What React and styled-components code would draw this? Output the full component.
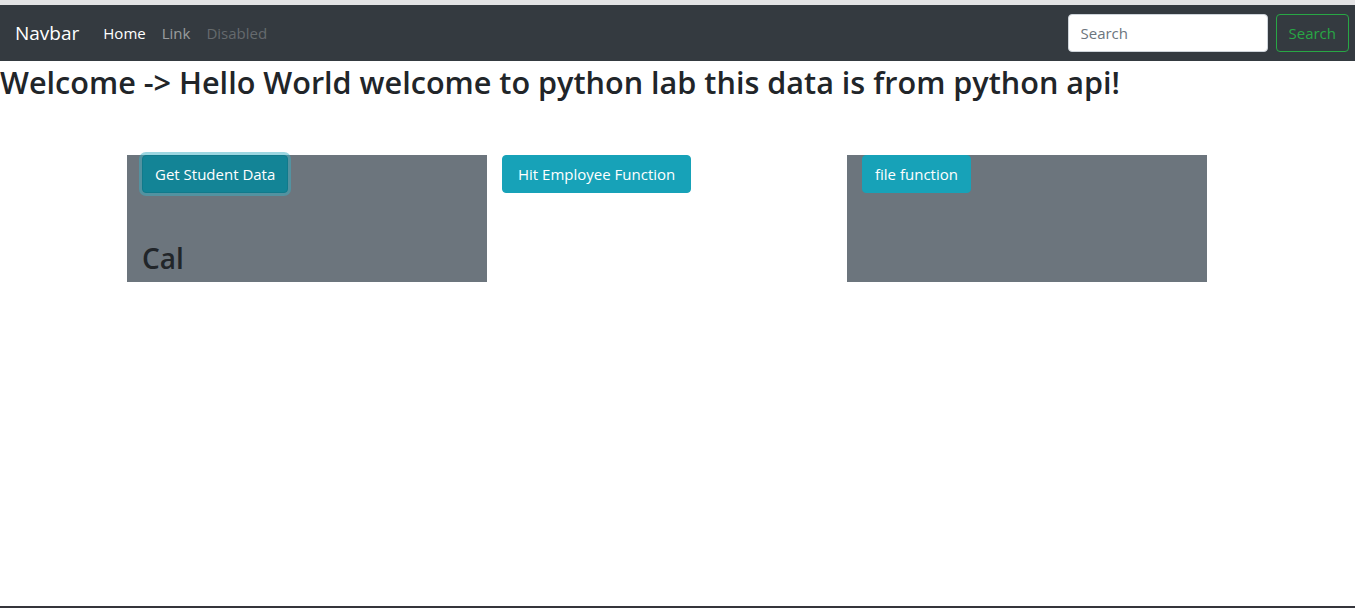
import React from 'react'
import styled, { createGlobalStyle } from 'styled-components'

const GlobalStyle = createGlobalStyle`
  html, body {
    margin: 0;
    padding: 0;
    background: #fff;
  }
  body {
    font-family: "Open Sans", "Noto Sans", Arial, sans-serif;
    color: #212529;
  }
  * { box-sizing: border-box; }
`

const Frame = styled.div`
  min-height: 100vh;
  display: flex;
  flex-direction: column;
  border-top: 5px solid #e3e3e5;
  border-bottom: 2px solid #35353b;
`

const Nav = styled.nav`
  height: 56px;
  background: #343a40;
  display: flex;
  align-items: center;
  padding: 0 6px 0 15px;
`

const Brand = styled.a`
  color: #fff;
  font-size: 19px;
  margin-right: 16px;
  text-decoration: none;
`

const NavLinks = styled.div`
  display: flex;
`

const NavLink = styled.a`
  padding: 0 8px;
  font-size: 15px;
  text-decoration: none;
  color: ${p => p.$state === 'active' ? '#fff' : p.$state === 'disabled' ? 'rgba(255,255,255,.25)' : 'rgba(255,255,255,.5)'};
`

const SearchForm = styled.form`
  margin-left: auto;
  display: flex;
  gap: 8px;
`

const SearchInput = styled.input`
  width: 200px;
  height: 38px;
  border: 1px solid #ced4da;
  border-radius: 4px;
  padding: 6px 12px;
  font-family: inherit;
  font-size: 15px;
  color: #495057;
  &::placeholder { color: #6c757d; }
`

const OutlineButton = styled.button`
  height: 38px;
  padding: 0 12px;
  background: transparent;
  border: 1px solid #28a745;
  border-radius: 4px;
  color: #28a745;
  font-family: inherit;
  font-size: 15px;
`

const Heading = styled.h2`
  margin: 0 0 8px;
  font-size: 30.6px;
  font-weight: 600;
  line-height: 42px;
  white-space: nowrap;
`

const Row = styled.div`
  display: grid;
  grid-template-columns: repeat(3, 360px);
  margin: 44px 0 0 127px;
`

const Col = styled.div`
  padding: 0 15px;
  background: ${p => p.$filled ? '#6c757d' : 'transparent'};
`

const Button = styled.button`
  height: 38px;
  padding: 0 ${p => p.$wide ? '15px' : '12px'};
  border-radius: 4px;
  font-family: inherit;
  font-size: 15px;
  color: #fff;
  background: ${p => p.$focused ? '#138496' : '#17a2b8'};
  border: 1px solid ${p => p.$focused ? '#117a8b' : '#17a2b8'};
  box-shadow: ${p => p.$focused ? '0 0 0 3px rgba(58,176,195,.5)' : 'none'};
`

const Result = styled.h3`
  margin: 49px 0 6px;
  font-size: 28px;
  font-weight: 600;
  line-height: 1.2;
`

export default function App() {
  return (
    <Frame>
      <GlobalStyle />
      <Nav>
        <Brand href="#">Navbar</Brand>
        <NavLinks>
          <NavLink $state="active" href="#">Home</NavLink>
          <NavLink href="#">Link</NavLink>
          <NavLink $state="disabled" href="#">Disabled</NavLink>
        </NavLinks>
        <SearchForm onSubmit={e => e.preventDefault()}>
          <SearchInput type="search" placeholder="Search" />
          <OutlineButton type="submit">Search</OutlineButton>
        </SearchForm>
      </Nav>
      <Heading>Welcome -&gt; Hello World welcome to python lab this data is from python api!</Heading>
      <Row>
        <Col $filled>
          <Button $focused>Get Student Data</Button>
          <Result>Cal</Result>
        </Col>
        <Col>
          <Button $wide>Hit Employee Function</Button>
        </Col>
        <Col $filled>
          <Button>file function</Button>
        </Col>
      </Row>
    </Frame>
  )
}
